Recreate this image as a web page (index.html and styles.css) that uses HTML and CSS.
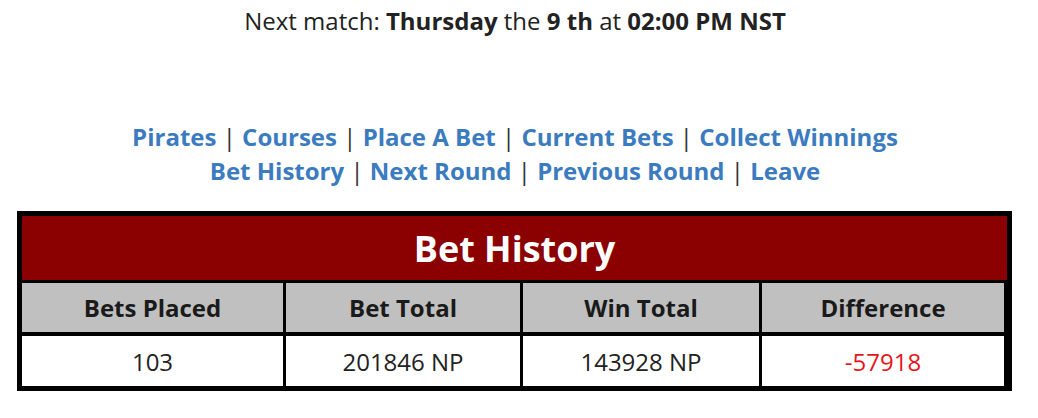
FILE: index.html
```html
<!DOCTYPE html>
<html>
<head>
<meta charset="utf-8">
<link rel="stylesheet" href="styles.css">
</head>
<body>
<div class="page">
  <p class="next">Next match: <b>Thursday</b> the <b>9 th</b> at <b>02:00 PM NST</b></p>
  <nav class="nav">
    <div class="nav-line"><a href="#">Pirates</a> | <a href="#">Courses</a> | <a href="#">Place A Bet</a> | <a href="#">Current Bets</a> | <a href="#">Collect Winnings</a></div>
    <div class="nav-line"><a href="#">Bet History</a> | <a href="#">Next Round</a> | <a href="#">Previous Round</a> | <a href="#">Leave</a></div>
  </nav>
  <div class="history">
    <div class="title">Bet History</div>
    <div class="grid">
      <div class="th">Bets Placed</div>
      <div class="th">Bet Total</div>
      <div class="th">Win Total</div>
      <div class="th">Difference</div>
      <div class="td">103</div>
      <div class="td">201846 NP</div>
      <div class="td">143928 NP</div>
      <div class="td neg">-57918</div>
    </div>
  </div>
</div>
</body>
</html>
```

FILE: styles.css
```css
html, body {
  margin: 0;
  padding: 0;
  background: #fff;
}
body {
  font-family: "Open Sans", "DejaVu Sans", sans-serif;
  color: #222;
}
.page {
  width: 1030px;
}
.next {
  margin: 0;
  padding-top: 4px;
  text-align: center;
  font-size: 24px;
  line-height: 34px;
}
.next b {
  font-weight: 700;
}
.nav {
  margin-top: 82px;
  text-align: center;
  font-size: 24px;
  line-height: 34px;
  color: #333;
}
.nav a {
  color: #3b7bbf;
  font-weight: 700;
  text-decoration: none;
}
.history {
  margin: 23px 0 0 17px;
  width: 985px;
  border: 5px solid #000;
  background: #000;
}
.title {
  height: 64px;
  background: #8b0000;
  color: #fff;
  font-weight: 700;
  font-size: 36px;
  display: flex;
  align-items: center;
  justify-content: center;
  margin-bottom: 3px;
}
.grid {
  display: grid;
  grid-template-columns: 261px 234px 236px 242px;
  column-gap: 3px;
  row-gap: 4px;
  padding-right: 3px;
}
.th, .td {
  display: flex;
  align-items: center;
  justify-content: center;
  font-size: 24px;
}
.th {
  height: 49px;
  background: #c0c0c0;
  font-weight: 700;
  color: #1a1a1a;
}
.td {
  height: 50px;
  background: #fff;
  color: #222;
}
.td.neg {
  color: #e8141c;
}
```
